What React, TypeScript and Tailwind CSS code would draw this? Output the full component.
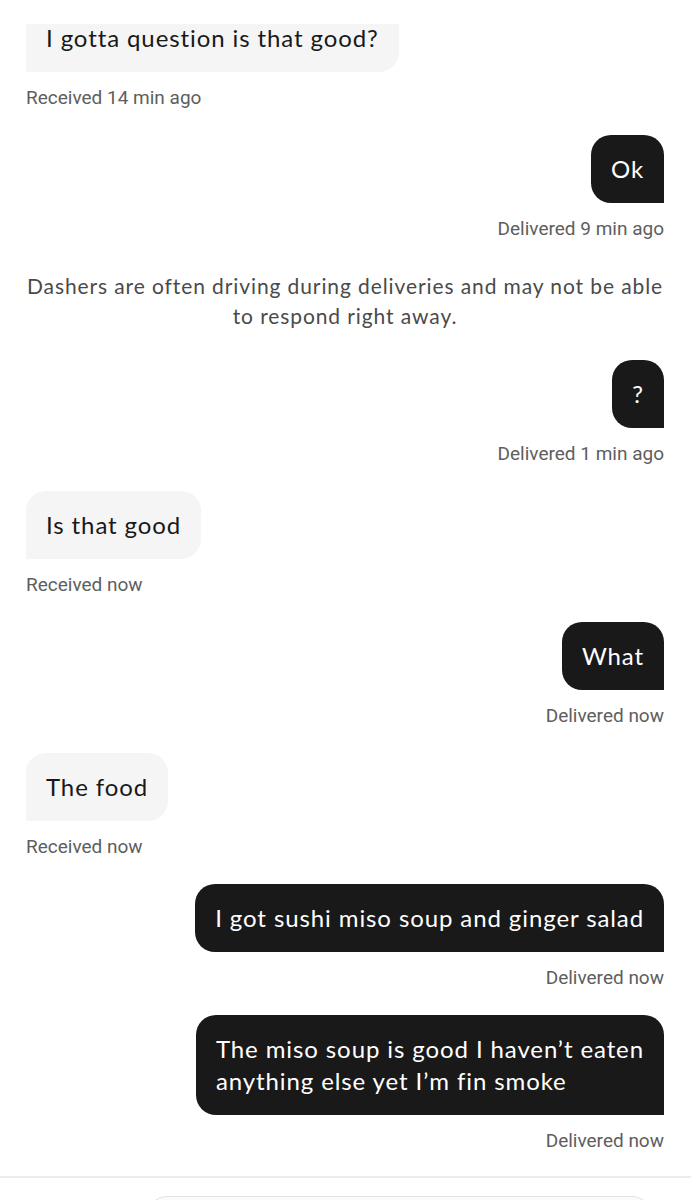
type Msg = {
  side: 'in' | 'out'
  text: string[]
  status: string
}

const messages: (Msg | { note: string[] })[] = [
  { side: 'in', text: ['I gotta question is that good?'], status: 'Received 14 min ago' },
  { side: 'out', text: ['Ok'], status: 'Delivered 9 min ago' },
  {
    note: [
      'Dashers are often driving during deliveries and may not be able',
      'to respond right away.',
    ],
  },
  { side: 'out', text: ['?'], status: 'Delivered 1 min ago' },
  { side: 'in', text: ['Is that good'], status: 'Received now' },
  { side: 'out', text: ['What'], status: 'Delivered now' },
  { side: 'in', text: ['The food'], status: 'Received now' },
  { side: 'out', text: ['I got sushi miso soup and ginger salad'], status: 'Delivered now' },
  {
    side: 'out',
    text: ['The miso soup is good I haven’t eaten', 'anything else yet I’m fin smoke'],
    status: 'Delivered now',
  },
]

function Bubble({ msg }: { msg: Msg }) {
  const out = msg.side === 'out'
  return (
    <div className={out ? 'flex flex-col items-end' : 'flex flex-col items-start'}>
      <div
        className={
          out
            ? 'rounded-[20px] rounded-br-none bg-[#191919] px-[20px] py-[18px] text-[24px] leading-[32px] tracking-[0.9px] text-white'
            : 'rounded-[20px] rounded-bl-none bg-[#f5f5f5] px-[20px] py-[18px] text-[24px] leading-[32px] tracking-[0.9px] text-[#191919]'
        }
        style={{ fontFamily: 'Lato, "Open Sans", sans-serif' }}
      >
        {msg.text.map((t) => (
          <div key={t} className="whitespace-nowrap">
            {t}
          </div>
        ))}
      </div>
      <div
        className="mt-[16px] h-[20px] text-[19px] leading-[20px] text-[#5e5e5e]"
        style={{ fontFamily: 'Roboto, "Liberation Sans", sans-serif' }}
      >
        {msg.status}
      </div>
    </div>
  )
}

export default function App() {
  return (
    <div className="flex h-[1200px] w-[691px] flex-col overflow-hidden bg-white">
      <div className="h-[24px] shrink-0 bg-white" />
      <div className="flex-1 overflow-hidden">
        <div className="-mt-[20px] flex flex-col gap-[27px] pl-[26px] pr-[27px]">
          {messages.map((m, i) =>
            'note' in m ? (
              <div
                key={i}
                className="mt-[5px] mb-[2px] whitespace-nowrap text-center text-[21px] leading-[30px] tracking-[0.9px] text-[#4a4a4a]"
                style={{ fontFamily: 'Lato, "Open Sans", sans-serif' }}
              >
                {m.note.map((l) => (
                  <div key={l}>{l}</div>
                ))}
              </div>
            ) : (
              <Bubble key={i} msg={m} />
            ),
          )}
        </div>
      </div>
      <div className="h-[2px] shrink-0 bg-[#ececec]" />
      <div className="h-[22px] shrink-0 pl-[147px] pr-[39px] pt-[18px]">
        <div className="h-[40px] rounded-full border border-[#e2e2e2] bg-[#fafafa]" />
      </div>
    </div>
  )
}
